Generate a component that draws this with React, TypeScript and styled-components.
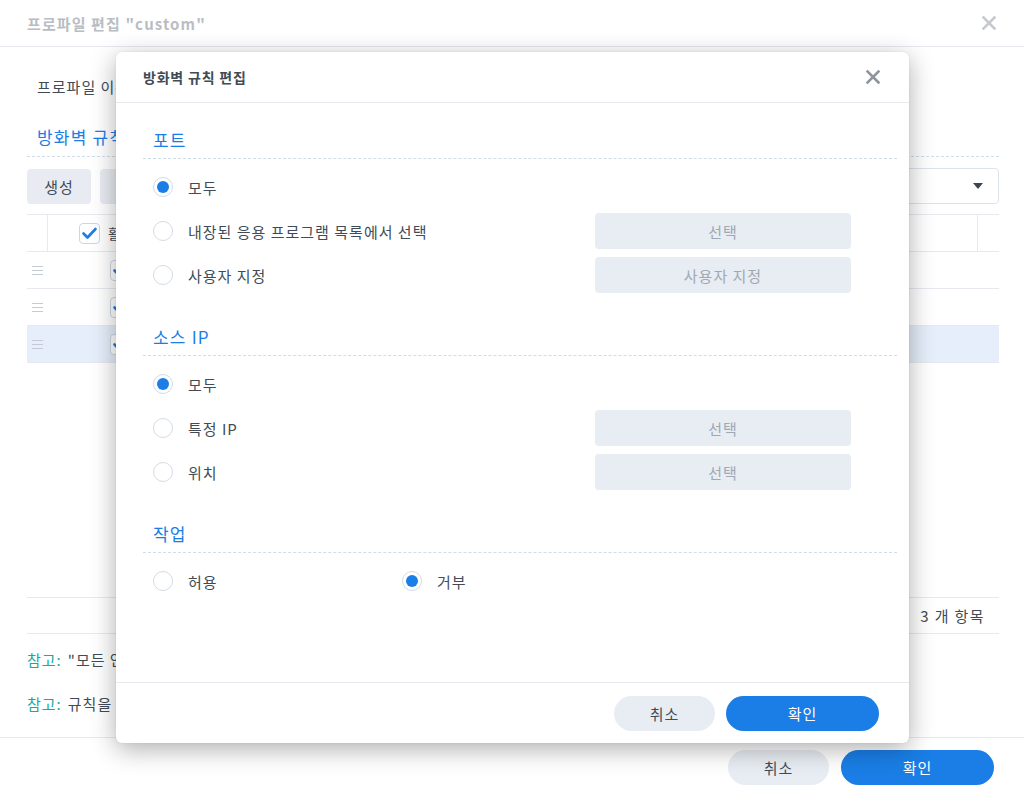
import React from "react";
import styled, { createGlobalStyle } from "styled-components";

const GlobalStyle = createGlobalStyle`
  html, body {
    margin: 0;
    padding: 0;
    background: #ffffff;
  }
  body {
    font-family: "Noto Sans CJK KR", "Noto Sans", sans-serif;
    color: #414b55;
    letter-spacing: 1px;
  }
  * {
    box-sizing: border-box;
  }
  button {
    letter-spacing: inherit;
  }
`;

const Window = styled.div`
  position: relative;
  width: 1024px;
  height: 796px;
  overflow: hidden;
  display: flex;
  flex-direction: column;
  background: #fff;
`;

const TitleBar = styled.div`
  height: 47px;
  flex: none;
  display: flex;
  align-items: center;
  justify-content: space-between;
  padding: 0 28px 0 27px;
  border-bottom: 1px solid #e6eaef;
`;

const WindowTitle = styled.div`
  font-size: 15px;
  font-weight: 700;
  color: #b9bdc3;
  letter-spacing: 1.1px;
`;

const CloseButton = styled.button<{ $muted?: boolean }>`
  border: none;
  background: none;
  padding: 0;
  width: 14px;
  height: 14px;
  display: flex;
  cursor: pointer;
  color: ${(p) => (p.$muted ? "#c6cace" : "#8e959c")};
`;

const Body = styled.div`
  flex: 1;
  display: flex;
  flex-direction: column;
  padding: 0 25px 0 27px;
`;

const FieldRow = styled.div`
  margin-top: 21px;
  height: 36px;
  display: flex;
  align-items: center;
  gap: 20px;
  padding-left: 10px;
  font-size: 15px;
`;

const TextInput = styled.div`
  width: 320px;
  height: 34px;
  border: 1px solid #dde3ea;
  border-radius: 4px;
  padding: 0 10px;
  display: flex;
  align-items: center;
  font-size: 15px;
`;

const SectionHeading = styled.div<{ $gap?: number }>`
  margin-top: ${(p) => p.$gap ?? 0}px;
  padding: 0 0 7px 10px;
  line-height: 24px;
  font-size: 17px;
  letter-spacing: 1.2px;
  color: #1a7ee6;
  border-bottom: 1px dashed #cfdcea;
`;

const DialogHeading = styled(SectionHeading)`
  padding-bottom: 6px;
`;

const Toolbar = styled.div`
  margin-top: 11px;
  height: 36px;
  display: flex;
  align-items: center;
  gap: 9px;
`;

const ToolButton = styled.button`
  height: 35px;
  min-width: 64px;
  padding: 0 16px;
  border: none;
  border-radius: 4px;
  background: #e8ecf2;
  color: #414b55;
  font: inherit;
  font-size: 15px;
`;

const Select = styled.div`
  margin-left: auto;
  width: 240px;
  height: 36px;
  border: 1px solid #dde3ea;
  border-radius: 4px;
  display: flex;
  align-items: center;
  justify-content: space-between;
  padding: 0 15px 0 12px;
  font-size: 15px;
`;

const Caret = styled.span`
  width: 0;
  height: 0;
  border-left: 5px solid transparent;
  border-right: 5px solid transparent;
  border-top: 6px solid #3d4650;
`;

const Table = styled.div`
  margin-top: 10px;
  height: 420px;
  border-top: 1px solid #e6eaef;
  display: flex;
  flex-direction: column;
`;

const TableRow = styled.div<{ $selected?: boolean }>`
  height: 37px;
  flex: none;
  display: grid;
  grid-template-columns: 21px 120px 1fr 180px 21px;
  align-items: stretch;
  border-bottom: 1px solid #e6eaef;
  background: ${(p) => (p.$selected ? "#e5eefa" : "transparent")};
  font-size: 14px;
`;

const Cell = styled.div<{ $divider?: boolean; $pad?: number }>`
  display: flex;
  align-items: center;
  gap: 8px;
  padding-left: ${(p) => p.$pad ?? 0}px;
  border-right: ${(p) => (p.$divider ? "1px solid #e6eaef" : "none")};
  white-space: nowrap;
  overflow: hidden;
`;

const Handle = styled.span`
  width: 11px;
  height: 9px;
  margin-left: 5px;
  border-top: 1px solid #c4cbd3;
  border-bottom: 1px solid #c4cbd3;
  position: relative;
  &::after {
    content: "";
    position: absolute;
    left: 0;
    right: 0;
    top: 3px;
    border-top: 1px solid #c4cbd3;
  }
`;

const Pager = styled.div`
  margin-top: auto;
  height: 37px;
  border-top: 1px solid #e6eaef;
  border-bottom: 1px solid #e6eaef;
  display: flex;
  align-items: center;
  justify-content: flex-end;
  padding-right: 14px;
  font-size: 15px;
  letter-spacing: 1.4px;
`;

const Note = styled.div<{ $gap: number }>`
  margin-top: ${(p) => p.$gap}px;
  line-height: 22px;
  font-size: 15px;
  white-space: nowrap;
`;

const NoteTag = styled.span`
  color: #16aaa0;
  margin-right: 6px;
`;

const Footer = styled.div`
  height: 59px;
  flex: none;
  display: flex;
  align-items: center;
  justify-content: flex-end;
  gap: 12px;
  border-top: 1px solid #e6eaef;
  padding-right: 30px;
`;

const PillButton = styled.button<{ $primary?: boolean }>`
  height: 35px;
  width: ${(p) => (p.$primary ? 153 : 101)}px;
  border: none;
  border-radius: 18px;
  font: inherit;
  font-size: 15px;
  background: ${(p) => (p.$primary ? "#1a7ee6" : "#e8edf3")};
  color: ${(p) => (p.$primary ? "#ffffff" : "#414b55")};
  cursor: pointer;
`;

/* rule editor dialog */

const Dialog = styled.div`
  position: absolute;
  left: 116px;
  top: 52px;
  width: 793px;
  height: 691px;
  background: #fff;
  border-radius: 6px;
  box-shadow: 0 6px 26px rgba(0, 0, 0, 0.32), 0 0 2px rgba(0, 0, 0, 0.08);
  display: flex;
  flex-direction: column;
`;

const DialogHeader = styled.div`
  height: 51px;
  flex: none;
  display: flex;
  align-items: center;
  justify-content: space-between;
  padding: 0 29px 0 27px;
  border-bottom: 1px solid #e6eaef;
`;

const DialogTitle = styled.div`
  font-size: 14px;
  font-weight: 600;
  letter-spacing: 0.8px;
  color: #414b55;
`;

const DialogBody = styled.div`
  flex: 1;
  padding: 25px 12px 0 27px;
`;

const OptionList = styled.div`
  padding-top: 6px;
`;

const OptionRow = styled.div`
  height: 44px;
  display: flex;
  align-items: center;
  padding: 0 46px 0 10px;
`;

const Option = styled.label<{ $width?: number }>`
  display: flex;
  align-items: center;
  gap: 15px;
  font-size: 15px;
  color: #414b55;
  flex: ${(p) => (p.$width ? "none" : "1")};
  width: ${(p) => (p.$width ? `${p.$width}px` : "auto")};
`;

const Radio = styled.span<{ $checked?: boolean }>`
  width: 20px;
  height: 20px;
  flex: none;
  border-radius: 50%;
  border: 1px solid ${(p) => (p.$checked ? "#cfdcea" : "#d4dce5")};
  background: #fff;
  display: flex;
  align-items: center;
  justify-content: center;
  &::after {
    content: "";
    width: 12px;
    height: 12px;
    border-radius: 50%;
    background: ${(p) => (p.$checked ? "#1a7ee6" : "transparent")};
  }
`;

const SideButton = styled.button`
  width: 256px;
  height: 36px;
  border: none;
  border-radius: 4px;
  background: #e8ecf3;
  color: #a0a8b2;
  font: inherit;
  font-size: 15px;
`;

const DialogFooter = styled.div`
  height: 61px;
  flex: none;
  display: flex;
  align-items: center;
  justify-content: flex-end;
  gap: 11px;
  padding-right: 30px;
  border-top: 1px solid #e6eaef;
`;

function CloseIcon() {
  return (
    <svg width="14" height="14" viewBox="0 0 14 14">
      <path
        d="M1.5 1.5 L12.5 12.5 M12.5 1.5 L1.5 12.5"
        stroke="currentColor"
        strokeWidth="2.6"
        strokeLinecap="square"
        fill="none"
      />
    </svg>
  );
}

function Checkbox() {
  return (
    <svg width="21" height="21" viewBox="0 0 21 21" style={{ flex: "none" }}>
      <rect x="0.5" y="0.5" width="20" height="20" rx="3.5" fill="#fff" stroke="#cfd6de" />
      <path
        d="M4.5 10.5 L8.5 14.5 L16.5 6"
        stroke="#1a7ee6"
        strokeWidth="2.6"
        fill="none"
        strokeLinecap="round"
        strokeLinejoin="round"
      />
    </svg>
  );
}

type Choice = { label: string; checked?: boolean; action?: string };

const portChoices: Choice[] = [
  { label: "모두", checked: true },
  { label: "내장된 응용 프로그램 목록에서 선택", action: "선택" },
  { label: "사용자 지정", action: "사용자 지정" },
];

const sourceChoices: Choice[] = [
  { label: "모두", checked: true },
  { label: "특정 IP", action: "선택" },
  { label: "위치", action: "선택" },
];

const rules = [
  { port: "모두", action: "허용" },
  { port: "5000,5001", action: "허용" },
  { port: "모두", action: "거부" },
];

function ChoiceRows({ items }: { items: Choice[] }) {
  return (
    <OptionList>
      {items.map((c) => (
        <OptionRow key={c.label}>
          <Option>
            <Radio $checked={c.checked} />
            {c.label}
          </Option>
          {c.action && <SideButton disabled>{c.action}</SideButton>}
        </OptionRow>
      ))}
    </OptionList>
  );
}

function RuleDialog() {
  return (
    <Dialog>
      <DialogHeader>
        <DialogTitle>방화벽 규칙 편집</DialogTitle>
        <CloseButton>
          <CloseIcon />
        </CloseButton>
      </DialogHeader>
      <DialogBody>
        <DialogHeading>포트</DialogHeading>
        <ChoiceRows items={portChoices} />

        <DialogHeading $gap={28}>소스 IP</DialogHeading>
        <ChoiceRows items={sourceChoices} />

        <DialogHeading $gap={28}>작업</DialogHeading>
        <OptionList>
          <OptionRow>
            <Option $width={249}>
              <Radio />
              허용
            </Option>
            <Option>
              <Radio $checked />
              거부
            </Option>
          </OptionRow>
        </OptionList>
      </DialogBody>
      <DialogFooter>
        <PillButton>취소</PillButton>
        <PillButton $primary>확인</PillButton>
      </DialogFooter>
    </Dialog>
  );
}

export default function App() {
  return (
    <>
      <GlobalStyle />
      <Window>
        <TitleBar>
          <WindowTitle>프로파일 편집 "custom"</WindowTitle>
          <CloseButton $muted>
            <CloseIcon />
          </CloseButton>
        </TitleBar>

        <Body>
          <FieldRow>
            프로파일 이름:
            <TextInput>custom</TextInput>
          </FieldRow>

          <SectionHeading $gap={21}>방화벽 규칙</SectionHeading>

          <Toolbar>
            <ToolButton>생성</ToolButton>
            <ToolButton>편집</ToolButton>
            <ToolButton>삭제</ToolButton>
            <Select>
              모든 인터페이스
              <Caret />
            </Select>
          </Toolbar>

          <Table>
            <TableRow>
              <Cell $divider />
              <Cell $pad={31}>
                <Checkbox />
                활성화
              </Cell>
              <Cell $pad={12}>포트</Cell>
              <Cell $pad={12} $divider>
                작업
              </Cell>
              <Cell />
            </TableRow>
            {rules.map((r, i) => (
              <TableRow key={i} $selected={i === 2}>
                <Cell>
                  <Handle />
                </Cell>
                <Cell $pad={62}>
                  <Checkbox />
                </Cell>
                <Cell $pad={12}>{r.port}</Cell>
                <Cell $pad={12}>{r.action}</Cell>
                <Cell />
              </TableRow>
            ))}
            <Pager>3 개 항목</Pager>
          </Table>

          <Note $gap={15}>
            <NoteTag>참고:</NoteTag>"모든 인터페이스" 규칙이 먼저 적용됩니다.
          </Note>
          <Note $gap={22}>
            <NoteTag>참고:</NoteTag>규칙을 끌어서 순서를 변경하십시오.
          </Note>
        </Body>

        <Footer>
          <PillButton>취소</PillButton>
          <PillButton $primary>확인</PillButton>
        </Footer>

        <RuleDialog />
      </Window>
    </>
  );
}
